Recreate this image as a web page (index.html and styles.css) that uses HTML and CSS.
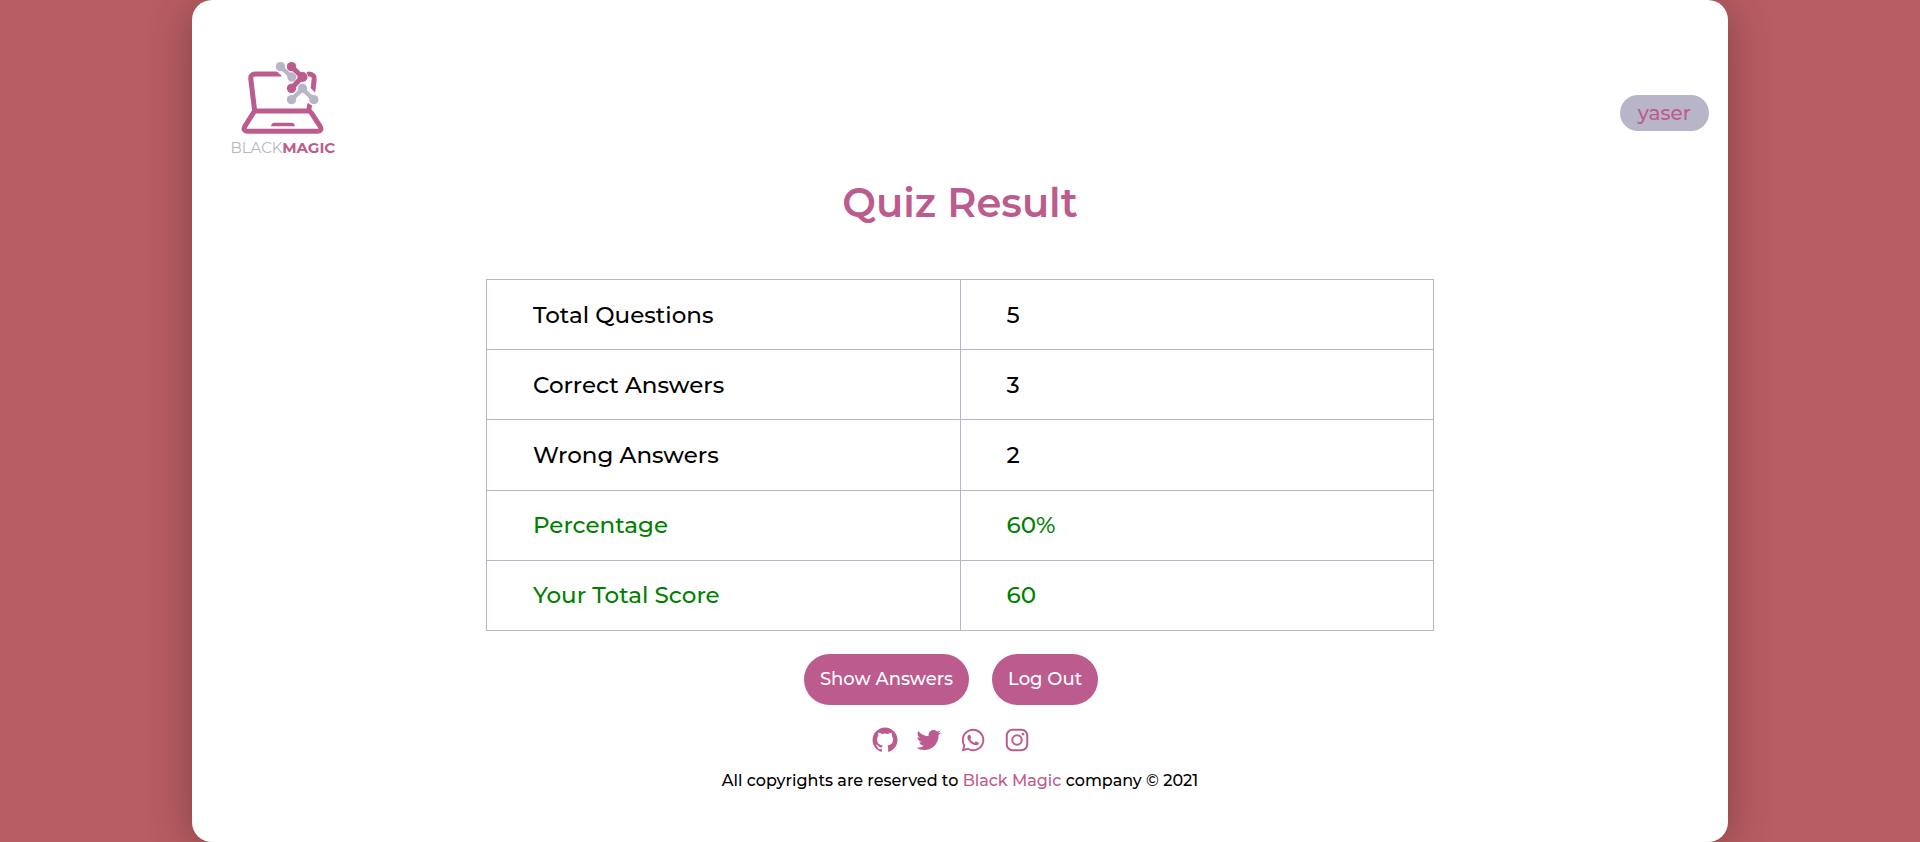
FILE: index.html
```html
<!DOCTYPE html>
<html lang="en">
<head>
<meta charset="utf-8">
<meta name="viewport" content="width=device-width, initial-scale=1">
<title>Quiz Result</title>
<link rel="stylesheet" href="styles.css">
</head>
<body>
<div class="card">
  <header class="header">
    <a class="logo" href="#" aria-label="Black Magic">
      <svg viewBox="30 30 320 285" fill="none" stroke-linecap="round" stroke-linejoin="round">
        <g class="logo-line">
          <path d="M103 178 92 88Q90 72 106 72H181"/>
          <path d="M266 72Q284 73 282 88L278 124"/>
          <path d="M268 166 266 180"/>
          <path d="M108 183H264Q270 183 273 188L300 229Q307 243 292 244H82Q67 243 74 229L100 188Q103 183 108 183Z"/>
        </g>
        <path class="logo-fill" d="M153 229Q153 218 163 218H214Q224 218 224 229Z"/>
        <path class="logo-gap" d="M181 50 214 81M214 50 246 81 214 115M214 149 247 115 281 149"/>
        <g class="logo-gray">
          <path d="M181 50 214 81"/>
          <circle cx="181" cy="50" r="14"/><circle cx="215" cy="81" r="14"/>
        </g>
        <path class="logo-split" d="M214 50 246 81 214 115"/>
        <g class="logo-pink">
          <path d="M214 50 246 81 214 115"/>
          <circle cx="214" cy="50" r="14"/><circle cx="247" cy="81" r="15"/><circle cx="214" cy="115" r="14"/>
        </g>
        <g class="logo-gray">
          <path d="M214 149 247 117 281 149"/>
          <circle cx="214" cy="149" r="14"/><circle cx="247" cy="115" r="14"/><circle cx="281" cy="149" r="14"/>
        </g>
        <text class="logo-light" x="187" y="308" text-anchor="end">BLACK</text>
        <text class="logo-bold" x="186" y="308">MAGIC</text>
      </svg>
    </a>
    <span class="user">yaser</span>
  </header>
  <main class="main">
    <h1 class="title">Quiz Result</h1>
    <table class="results">
      <tbody>
        <tr><th scope="row">Total Questions</th><td>5</td></tr>
        <tr><th scope="row">Correct Answers</th><td>3</td></tr>
        <tr><th scope="row">Wrong Answers</th><td>2</td></tr>
        <tr class="good"><th scope="row">Percentage</th><td>60%</td></tr>
        <tr class="good"><th scope="row">Your Total Score</th><td>60</td></tr>
      </tbody>
    </table>
    <div class="actions">
      <button class="btn" type="button">Show Answers</button>
      <button class="btn" type="button">Log Out</button>
    </div>
  </main>
  <footer class="footer">
    <nav class="social" aria-label="Social media">
      <a href="#" aria-label="GitHub"><svg viewBox="0 0 24 24"><path d="M12.026 2c-5.509 0-9.974 4.465-9.974 9.974 0 4.406 2.857 8.145 6.821 9.465.499.09.679-.217.679-.481 0-.237-.008-.865-.011-1.696-2.775.602-3.361-1.338-3.361-1.338-.452-1.152-1.107-1.459-1.107-1.459-.905-.619.069-.605.069-.605 1.002.07 1.527 1.028 1.527 1.028.89 1.524 2.336 1.084 2.902.829.091-.645.351-1.085.635-1.334-2.214-.251-4.542-1.107-4.542-4.93 0-1.087.389-1.979 1.024-2.675-.101-.253-.446-1.268.099-2.64 0 0 .837-.269 2.742 1.021a9.582 9.582 0 0 1 2.496-.336 9.554 9.554 0 0 1 2.496.336c1.906-1.291 2.742-1.021 2.742-1.021.545 1.372.203 2.387.099 2.64.64.696 1.024 1.587 1.024 2.675 0 3.833-2.33 4.675-4.552 4.922.355.308.675.916.675 1.846 0 1.334-.012 2.41-.012 2.737 0 .267.178.577.687.479C19.146 20.115 22 16.379 22 11.974 22 6.465 17.535 2 12.026 2z"/></svg></a>
      <a href="#" aria-label="Twitter"><svg viewBox="0 0 24 24"><path d="M19.633 7.997c.013.175.013.349.013.523 0 5.325-4.053 11.461-11.46 11.461-2.282 0-4.402-.661-6.186-1.809.324.037.636.05.973.05a8.07 8.07 0 0 0 5.001-1.721 4.036 4.036 0 0 1-3.767-2.793c.249.037.499.062.761.062.361 0 .724-.05 1.061-.137a4.027 4.027 0 0 1-3.23-3.953v-.05c.537.299 1.16.486 1.82.511a4.022 4.022 0 0 1-1.796-3.354c0-.748.199-1.434.548-2.032a11.457 11.457 0 0 0 8.306 4.215c-.062-.3-.1-.611-.1-.923a4.026 4.026 0 0 1 4.028-4.028c1.16 0 2.207.486 2.943 1.272a7.957 7.957 0 0 0 2.556-.973 4.02 4.02 0 0 1-1.771 2.22 8.073 8.073 0 0 0 2.319-.624 8.645 8.645 0 0 1-2.019 2.083z"/></svg></a>
      <a href="#" aria-label="WhatsApp"><svg viewBox="0 0 24 24"><path fill-rule="evenodd" d="M18.403 5.633A8.919 8.919 0 0 0 12.053 3c-4.948 0-8.976 4.027-8.978 8.977 0 1.582.413 3.126 1.198 4.488L3 21.116l4.759-1.249a8.981 8.981 0 0 0 4.29 1.093h.004c4.947 0 8.975-4.027 8.977-8.977a8.926 8.926 0 0 0-2.627-6.35m-6.35 13.812h-.003a7.446 7.446 0 0 1-3.798-1.041l-.272-.162-2.824.741.753-2.753-.177-.282a7.448 7.448 0 0 1-1.141-3.971c.002-4.114 3.349-7.461 7.465-7.461a7.413 7.413 0 0 1 5.275 2.188 7.42 7.42 0 0 1 2.183 5.279c-.002 4.114-3.349 7.462-7.461 7.462m4.093-5.589c-.225-.113-1.327-.655-1.533-.73-.205-.075-.354-.112-.504.112s-.58.729-.711.879-.262.168-.486.056-.947-.349-1.804-1.113c-.667-.595-1.117-1.329-1.248-1.554s-.014-.346.099-.458c.101-.1.224-.262.336-.393.112-.131.149-.224.224-.374s.038-.281-.019-.393c-.056-.113-.505-1.217-.692-1.666-.181-.435-.366-.377-.504-.383a9.65 9.65 0 0 0-.429-.008.826.826 0 0 0-.599.28c-.206.225-.785.767-.785 1.871s.804 2.171.916 2.321c.112.15 1.582 2.415 3.832 3.387.536.231.954.369 1.279.473.537.171 1.026.146 1.413.089.431-.064 1.327-.542 1.514-1.066.187-.524.187-.973.131-1.067-.056-.094-.207-.151-.43-.263"/></svg></a>
      <a href="#" aria-label="Instagram"><svg viewBox="0 0 24 24"><g fill="none" stroke="currentColor" stroke-width="1.6"><rect x="3.8" y="3.8" width="16.4" height="16.4" rx="4.6"/><circle cx="12" cy="12" r="3.8"/></g><circle cx="16.8" cy="7.2" r="1.1"/></svg></a>
    </nav>
    <p class="copyright">All copyrights are reserved to <a href="#">Black Magic</a> company © 2021</p>
  </footer>
</div>
</body>
</html>
```
FILE: styles.css
```css
* {
  box-sizing: border-box;
}

body {
  margin: 0;
  background: #b85d61;
  color: #000;
  font-family: Montserrat, Inter, sans-serif;
  font-weight: 500;
}

a {
  color: #bc5c8e;
  text-decoration: none;
}

.card {
  width: 80%;
  min-height: 100vh;
  margin: 0 auto;
  padding: 60px 0 40px;
  background: #fff;
  border-radius: 20px;
  box-shadow: 0 6px 45px rgba(0, 0, 0, 0.3);
}

.header {
  display: flex;
  align-items: center;
  justify-content: space-between;
  padding: 0 19px 0 38px;
}

.logo svg {
  display: block;
  width: 107px;
  height: 95px;
  overflow: visible;
}

.logo-line {
  stroke: #bc5c8e;
  stroke-width: 15;
}

.logo-fill {
  fill: #bc5c8e;
}

.logo-gap {
  stroke: #fff;
  stroke-width: 36;
}

.logo-split {
  stroke: #fff;
  stroke-width: 18;
}

.logo-gray {
  fill: #b8b5c8;
}

.logo-pink {
  fill: #bc5c8e;
}

.logo-gray path {
  fill: none;
  stroke: #b8b5c8;
  stroke-width: 13;
}

.logo-pink path {
  fill: none;
  stroke: #bc5c8e;
  stroke-width: 15;
}

.logo-light {
  fill: #b8b5c8;
  font-size: 45px;
  font-weight: 400;
}

.logo-bold {
  fill: #bc5c8e;
  font-size: 45px;
  font-weight: 700;
}

.user {
  margin-top: 10px;
  padding: 6px 18px;
  border-radius: 20px;
  background: #b8b5c8;
  color: #bc5c8e;
  font-size: 20px;
  line-height: 24px;
}

.main {
  display: flex;
  flex-direction: column;
  align-items: center;
}

.title {
  margin: 24px 0 52px;
  color: #bc5c8e;
  font-size: 40px;
  font-weight: 600;
  line-height: 48px;
}

.results {
  width: 62%;
  max-width: 948px;
  height: 352px;
  table-layout: fixed;
  border-collapse: collapse;
  font-size: 23px;
  line-height: 28px;
}

.results th,
.results td {
  width: 50%;
  padding: 20px 46px;
  border: 1px solid #b8b5c8;
  font-weight: 500;
  text-align: left;
}

.good {
  color: green;
}

.actions {
  display: flex;
  gap: 23px;
  margin-top: 23px;
  padding-right: 18px;
}

.btn {
  padding: 14px 16px;
  border: 0;
  border-radius: 26px;
  background: #bc5c8e;
  color: #fff;
  font: inherit;
  font-size: 18px;
  line-height: 23px;
}

.footer {
  display: flex;
  flex-direction: column;
  align-items: center;
  margin-top: 20px;
}

.social {
  display: flex;
  gap: 14px;
  padding-right: 18px;
}

.social svg {
  display: block;
  width: 30px;
  height: 30px;
  fill: currentColor;
}

.copyright {
  margin: 16px 0 0;
  font-size: 16px;
  line-height: 20px;
}
```
